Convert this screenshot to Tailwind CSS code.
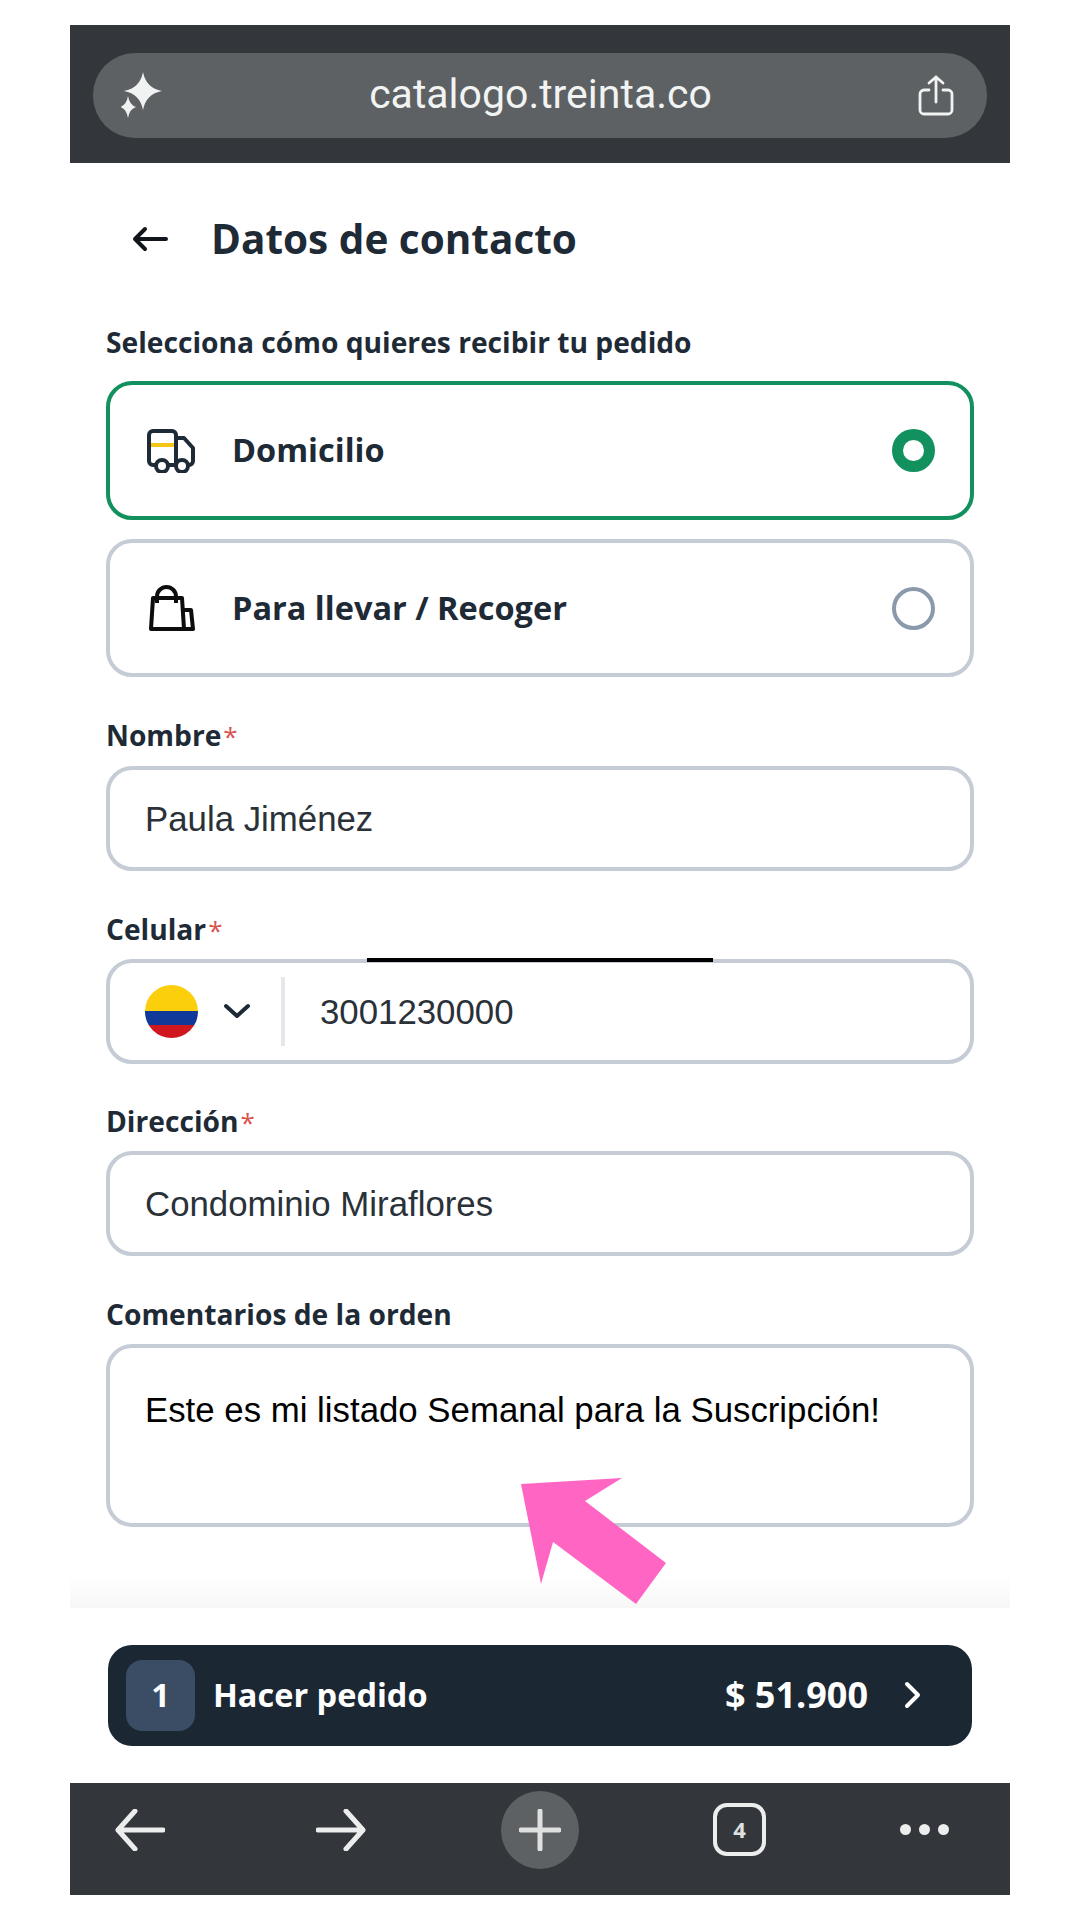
<!DOCTYPE html>
<html lang="es">
<head>
  <meta charset="UTF-8" />
  <title>Datos de contacto</title>
  <script src="https://cdn.jsdelivr.net/npm/@tailwindcss/browser@4"></script>
</head>
<body class="bg-white">
<div class="relative h-[1920px] w-[1080px] bg-white pt-[25px] px-[70px] font-['Open_Sans',sans-serif] text-[#1e2a36] overflow-hidden">

  <!-- Browser top bar -->
  <header class="h-[138px] bg-[#33363a] flex items-center pt-[2px] px-[23px]">
    <div class="h-[85px] w-[895px] rounded-[42px] bg-[#5d6164] flex items-center justify-between pl-[28px] pr-[33px]">
      <svg class="w-[42px] h-[46px]" viewBox="0 0 42 46" fill="#f1f2f2">
        <path d="M22 0 Q25 16 41 19 Q25 22 22 38 Q19 22 3 19 Q19 16 22 0Z"/>
        <path d="M7 24 Q8.500 33 15 35 Q8.500 37 7 46 Q5.500 37 -1 35 Q5.500 33 7 24Z"/>
      </svg>
      <span class="font-['Roboto',sans-serif] text-[41px] text-[#f2f3f3]">catalogo.treinta.co</span>
      <svg class="w-[36px] h-[41px]" viewBox="0 0 36 41" fill="none" stroke="#f1f2f2" stroke-width="2.800" stroke-linecap="round" stroke-linejoin="round">
        <path d="M11 15 H6 a4 4 0 0 0 -4 4 V35 a4 4 0 0 0 4 4 H30 a4 4 0 0 0 4 -4 V19 a4 4 0 0 0 -4 -4 H25"/>
        <path d="M18 27 V2 M11 8 L18 2 L25 8"/>
      </svg>
    </div>
  </header>

  <main class="px-[36px]">
    <!-- Title -->
    <div class="mt-[46px] h-[60px] flex items-center">
      <svg class="ml-[26px] w-[36px] h-[26px]" viewBox="0 0 36 26" fill="none" stroke="#11161c" stroke-width="4" stroke-linecap="round" stroke-linejoin="round">
        <path d="M34 13 H3 M13 3 L3 13 L13 23"/>
      </svg>
      <h1 class="ml-[43px] text-[40.500px] font-bold leading-none">Datos de contacto</h1>
    </div>

    <p class="mt-[53px] h-[40px] leading-[40px] text-[28.200px] font-bold">Selecciona cómo quieres recibir tu pedido</p>

    <!-- Delivery options -->
    <div class="mt-[19px] h-[139px] rounded-[26px] border-4 border-[#12915f] flex items-center justify-between pl-[37px] pr-[35px]">
      <div class="flex items-center gap-[37px]">
        <svg class="w-[48px] h-[44px]" viewBox="0 0 48 44" fill="none" stroke="#1e2a36" stroke-width="4" stroke-linejoin="round">
          <path d="M9 36 H6 a4 4 0 0 1 -4 -4 V6 a4 4 0 0 1 4 -4 H25 a4 4 0 0 1 4 4 V36 H21"/>
          <path d="M29 9 H37 L46 19 V32 a4 4 0 0 1 -4 4 H41 M29 36 H29"/>
          <circle cx="15" cy="37" r="6"/>
          <circle cx="35" cy="37" r="6"/>
          <path d="M4 16 H27" stroke="#f5c518" stroke-width="4"/>
        </svg>
        <span class="text-[32.500px] font-bold">Domicilio</span>
      </div>
      <span class="w-[43px] h-[43px] rounded-full border-[11px] border-[#12915f] bg-white"></span>
    </div>
    <div class="mt-[19px] h-[138px] rounded-[26px] border-4 border-[#c5ccd5] flex items-center justify-between pl-[37px] pr-[35px]">
      <div class="flex items-center gap-[37px]">
        <svg class="w-[48px] h-[47px]" viewBox="0 0 48 47" fill="none" stroke="#0d0d0d" stroke-width="4" stroke-linejoin="round">
          <path d="M4 44 L6 13 H35 L37 44 Z"/>
          <path d="M36 25 H44 L46 44 H37"/>
          <path d="M10 18 V11.500 a9.500 9.500 0 0 1 19 0 V18"/>
        </svg>
        <span class="text-[32.500px] font-bold">Para llevar / Recoger</span>
      </div>
      <span class="w-[43px] h-[43px] rounded-full border-4 border-[#8a9aab] bg-white"></span>
    </div>

    <!-- Form fields -->
    <div class="mt-[38px] flex flex-col gap-[37.500px] font-['Liberation_Sans',sans-serif] text-[34.800px]">
      <div>
        <label class="block h-[40px] leading-[40px] mb-[11px] text-[28.200px] font-bold font-['Open_Sans',sans-serif]">Nombre<span class="text-[#d9534f] ml-[2px] font-normal text-[26px]">*</span></label>
        <div class="h-[105px] rounded-[26px] border-4 border-[#c5ccd5] flex items-center pt-[2px] pl-[35px] text-[#2a3138]">Paula Jiménez</div>
      </div>
      <div>
        <label class="block h-[40px] leading-[40px] mb-[10px] text-[28.200px] font-bold font-['Open_Sans',sans-serif]">Celular<span class="text-[#d9534f] ml-[2px] font-normal text-[26px]">*</span></label>
        <div class="h-[105px] rounded-[26px] border-4 border-[#c5ccd5] flex items-center pl-[35px] text-[#2a3138]">
          <span class="w-[53px] h-[53px] rounded-full overflow-hidden flex flex-col">
            <span class="h-[26px] bg-[#fccf0c]"></span>
            <span class="h-[14px] bg-[#10399a]"></span>
            <span class="h-[13px] bg-[#d0161f]"></span>
          </span>
          <svg class="ml-[25px] w-[28px] h-[16px]" viewBox="0 0 28 16" fill="none" stroke="#1e2a36" stroke-width="4" stroke-linecap="round" stroke-linejoin="round">
            <path d="M3 3 L14 13 L25 3"/>
          </svg>
          <span class="ml-[30px] w-[4px] h-[69px] bg-[#e4e7eb]"></span>
          <span class="ml-[35px] pt-[2px]">3001230000</span>
        </div>
      </div>
      <div>
        <label class="block h-[40px] leading-[40px] mb-[10px] text-[28.200px] font-bold font-['Open_Sans',sans-serif]">Dirección<span class="text-[#d9534f] ml-[2px] font-normal text-[26px]">*</span></label>
        <div class="h-[105px] rounded-[26px] border-4 border-[#c5ccd5] flex items-center pt-[2px] pl-[35px] text-[#2a3138]">Condominio Miraflores</div>
      </div>
      <div>
        <label class="block h-[40px] leading-[40px] mb-[10px] text-[28.200px] font-bold font-['Open_Sans',sans-serif]">Comentarios de la orden</label>
        <div class="h-[183px] rounded-[26px] border-4 border-[#c5ccd5] pl-[35px] pt-[36px] text-black">Este es mi listado Semanal para la Suscripción!</div>
      </div>
    </div>
  </main>

  <!-- Shadow above the order button -->
  <div class="mt-[47px] h-[34px] bg-gradient-to-b from-white to-[#f7f7f7]"></div>

  <div class="px-[38px] mt-[37px]">
    <button class="w-full h-[101px] rounded-[24px] bg-[#1b2733] flex items-center pl-[18px] pr-[50px] text-white text-[32.500px] font-bold">
      <span class="w-[69px] h-[71px] rounded-[16px] bg-[#3a4d64] flex items-center justify-center">1</span>
      <span class="ml-[18px]">Hacer pedido</span>
      <span class="ml-auto text-[36px]">$ 51.900</span>
      <svg class="ml-[36px] w-[18px] h-[28px]" viewBox="0 0 18 28" fill="none" stroke="#fff" stroke-width="4" stroke-linecap="round" stroke-linejoin="round">
        <path d="M3 3 L14 14 L3 25"/>
      </svg>
    </button>
  </div>

  <!-- Browser bottom bar -->
  <nav class="mt-[37px] h-[112px] bg-[#33363a] flex items-center pb-[18px] pl-[45px]">
    <svg class="w-[50px] h-[42px]" viewBox="0 0 50 42" fill="none" stroke="#eceded" stroke-width="5" stroke-linecap="round" stroke-linejoin="round">
      <path d="M48 21 H3 M20 2 L3 21 L20 40"/>
    </svg>
    <svg class="ml-[151px] w-[50px] h-[42px]" viewBox="0 0 50 42" fill="none" stroke="#eceded" stroke-width="5" stroke-linecap="round" stroke-linejoin="round">
      <path d="M2 21 H47 M30 2 L47 21 L30 40"/>
    </svg>
    <span class="ml-[135px] w-[78px] h-[78px] rounded-full bg-[#5d6164] flex items-center justify-center">
      <svg class="w-[42px] h-[42px]" viewBox="0 0 42 42" stroke="#dfe0e0" stroke-width="5" stroke-linecap="round">
        <path d="M21 2 V40 M2 21 H40"/>
      </svg>
    </span>
    <span class="ml-[134px] w-[53px] h-[53px] rounded-[14px] border-[4px] border-[#eceded] flex items-center justify-center font-['Open_Sans',sans-serif] text-[22px] font-bold text-[#dfe0e0]">4</span>
    <span class="ml-[134px] flex gap-[8px]">
      <span class="w-[11px] h-[11px] rounded-full bg-[#eceded]"></span>
      <span class="w-[11px] h-[11px] rounded-full bg-[#eceded]"></span>
      <span class="w-[11px] h-[11px] rounded-full bg-[#eceded]"></span>
    </span>
  </nav>

  <!-- Overlays -->
  <div class="absolute left-[367px] top-[958px] w-[346px] h-[4px] bg-black"></div>
  <svg class="absolute left-0 top-0 w-[1080px] h-[1920px] pointer-events-none" viewBox="0 0 1080 1920" fill="#ff66c4">
    <polygon points="521,1484 622,1478 585,1501 666,1563 636,1604 553,1542 541,1584"/>
  </svg>
</div>
</body>
</html>
